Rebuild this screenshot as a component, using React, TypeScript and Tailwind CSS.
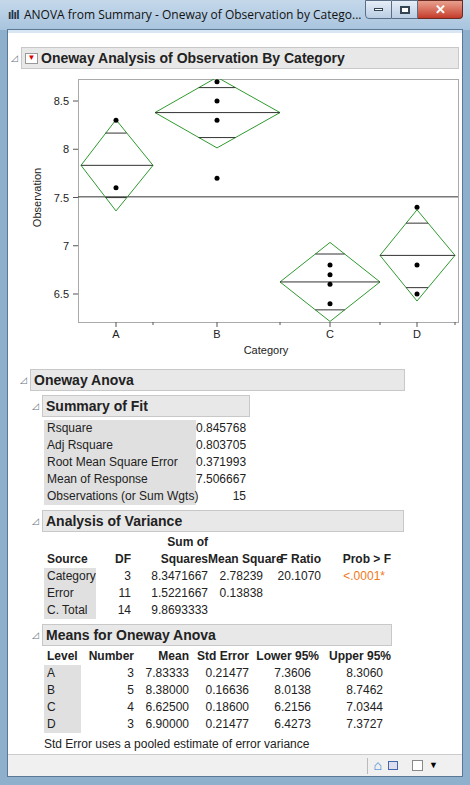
import React from "react";

const y = (v: number) => 100 + (8.5 - v) * 96.5;
const groups = [
  { x: 113, l: 78, r: 150, mean: 7.83333, lo: 7.3606, hi: 8.306, pts: [8.3, 7.6] },
  { x: 214, l: 152, r: 277, mean: 8.38, lo: 8.0138, hi: 8.7462, pts: [8.7, 8.5, 8.3, 7.7] },
  { x: 327, l: 277, r: 377, mean: 6.625, lo: 6.2156, hi: 7.0344, pts: [6.8, 6.7, 6.6, 6.4] },
  { x: 414, l: 377, r: 452, mean: 6.9, lo: 6.4273, hi: 7.3727, pts: [7.4, 6.8, 6.5] },
];

function Chart() {
  return (
    <svg width="454" height="290" viewBox="8 70 454 290" className="block">
      <defs>
        <clipPath id="c"><rect x="75" y="78" width="380" height="243" /></clipPath>
      </defs>
      <rect x="75.5" y="78.5" width="380" height="243" fill="white" stroke="#aaa" />
      {[8.5, 8, 7.5, 7, 6.5].map((v) => (
        <g key={v}>
          <line x1="70" x2="75" y1={y(v)} y2={y(v)} stroke="#555" />
          <text x="66" y={y(v) + 4} textAnchor="end" fontSize="11" fill="#222" fontFamily="Liberation Sans, sans-serif">{v}</text>
        </g>
      ))}
      <text transform={`translate(38 ${y(7.5)}) rotate(-90)`} textAnchor="middle" fontSize="11" fill="#222" fontFamily="Liberation Sans, sans-serif">Observation</text>
      <g clipPath="url(#c)">
        <line x1="75" x2="455" y1={y(7.506667)} y2={y(7.506667)} stroke="#333" />
        {groups.map((g, i) => {
          const half = g.hi - g.mean;
          const w = (g.r - g.l) / 2;
          const d = half * 0.707;
          const ww = w * (1 - d / half);
          return (
            <g key={i} fill="none" stroke="#2e9a2e">
              <polygon points={`${g.l},${y(g.mean)} ${g.x},${y(g.hi)} ${g.r},${y(g.mean)} ${g.x},${y(g.lo)}`} />
              <line x1={g.l} x2={g.r} y1={y(g.mean)} y2={y(g.mean)} stroke="#333" />
              <line x1={g.x - ww} x2={g.x + ww} y1={y(g.mean + d)} y2={y(g.mean + d)} stroke="#333" />
              <line x1={g.x - ww} x2={g.x + ww} y1={y(g.mean - d)} y2={y(g.mean - d)} stroke="#333" />
              {g.pts.map((p, j) => (
                <circle key={j} cx={g.x} cy={y(p)} r="2.5" fill="black" stroke="none" />
              ))}
            </g>
          );
        })}
      </g>
      {groups.map((g, i) => (
        <g key={i}>
          <line x1={g.x} x2={g.x} y1="321" y2="326" stroke="#555" />
          <line x1={g.r} x2={g.r} y1="321" y2="324" stroke="#555" />
          <text x={g.x} y="330" fontSize="11" textAnchor="middle" dy="7" fill="#222" fontFamily="Liberation Sans, sans-serif">{"ABCD"[i]}</text>
        </g>
      ))}
      <text x="263" y="353" fontSize="11" textAnchor="middle" fill="#222" fontFamily="Liberation Sans, sans-serif">Category</text>
    </svg>
  );
}

function Hdr({ t, w }: { t: string; w: string }) {
  return (
    <div className="flex items-center gap-[3px]">
      <span className="text-[9px] text-gray-500 leading-none">◿</span>
      <div className={`${w} h-[22px] bg-[#e8e8e8] border border-[#c8c8c8] flex items-center px-[3px] font-bold text-[14px] text-[#222]`}>{t}</div>
    </div>
  );
}

const cell = "h-[17px] leading-[17px] whitespace-nowrap";
const aovCols = "grid grid-cols-[52px_35px_77px_63px_50px_70px]";
const meanCols = "grid grid-cols-[37px_53px_55px_60px_70px_72px]";

export default function App() {
  return (
    <div className="w-[470px] h-[785px] bg-[#8fb0cc] relative overflow-hidden" style={{ fontFamily: "'Liberation Sans', Arial, sans-serif" }}>
      <div className="h-[30px] flex items-center bg-gradient-to-b from-[#c5d8ea] to-[#a8c4de] pl-[8px]">
        <span className="text-[12px] text-[#234] font-bold mr-[5px] tracking-tighter">ılıl</span>
        <span className="text-[12px] text-[#111]" style={{ fontFamily: "'Open Sans', sans-serif" }}>ANOVA from Summary - Oneway of Observation by Catego...</span>
        <div className="ml-auto mr-[7px] flex self-start">
          <div className="w-[27px] h-[19px] border border-[#5a6e86] rounded-bl-[4px] bg-gradient-to-b from-[#e6eef7] to-[#b9cde3] flex items-center justify-center"><div className="w-[9px] h-[3px] bg-white border border-[#345]" /></div>
          <div className="w-[26px] h-[19px] border border-[#5a6e86] border-l-0 bg-gradient-to-b from-[#e6eef7] to-[#b9cde3] flex items-center justify-center"><div className="w-[10px] h-[8px] border-2 border-[#345] bg-white" /></div>
          <div className="w-[45px] h-[19px] border border-[#6b2a22] border-l-0 rounded-br-[4px] bg-gradient-to-b from-[#e8a08f] to-[#c4392a] flex items-center justify-center text-white font-bold text-[13px]">✕</div>
        </div>
      </div>
      <div className="absolute left-[7px] right-[7px] top-[29px] bottom-[8px] border border-[#5b7895] bg-white flex flex-col">
        <div className="h-[3px] bg-[#d9e6f3]" />
        <div className="flex-1 pl-[3px] pt-[14px] text-[#222] text-[12px]">
          <div className="flex items-center gap-[3px]">
            <span className="text-[9px] text-gray-500 leading-none">◿</span>
            <div className="w-[438px] h-[22px] bg-[#e8e8e8] border border-[#c8c8c8] flex items-center px-[3px] gap-[3px] font-bold text-[14px]">
              <span className="w-[13px] h-[11px] bg-white border border-[#999] flex items-center justify-center text-[#d00] text-[8px]">▼</span>
              Oneway Analysis of Observation By Category
            </div>
          </div>
          <div className="mt-[2px]"><Chart /></div>
          <div className="pl-[9px] mt-[8px]">
            <Hdr t="Oneway Anova" w="w-[375px]" />
            <div className="pl-[12px] mt-[4px]">
              <Hdr t="Summary of Fit" w="w-[208px]" />
              <div className="flex ml-[12px] mt-[3px]">
                <div className="bg-[#e0e0e0] px-[3px] w-[152px]">
                  {["Rsquare", "Adj Rsquare", "Root Mean Square Error", "Mean of Response", "Observations (or Sum Wgts)"].map((s) => <div key={s} className={cell}>{s}</div>)}
                </div>
                <div className="w-[50px] text-right">
                  {["0.845768", "0.803705", "0.371993", "7.506667", "15"].map((s) => <div key={s} className={cell}>{s}</div>)}
                </div>
              </div>
              <div className="mt-[5px]"><Hdr t="Analysis of Variance" w="w-[362px]" /></div>
              <div className="ml-[12px] mt-[2px]">
                <div className={`${aovCols} font-bold`}>
                  <div /><div /><div className={`${cell} text-right`}>Sum of</div><div /><div /><div />
                  <div className={`${cell} px-[3px]`}>Source</div><div className={`${cell} text-right`}>DF</div><div className={`${cell} text-right`}>Squares</div><div className={`${cell} text-right`}>Mean Square</div><div className={`${cell} text-right`}>F Ratio</div><div className={`${cell} text-right`}>Prob &gt; F</div>
                </div>
                {[
                  ["Category", "3", "8.3471667", "2.78239", "20.1070", "<.0001*"],
                  ["Error", "11", "1.5221667", "0.13838", "", ""],
                  ["C. Total", "14", "9.8693333", "", "", ""],
                ].map((r) => (
                  <div key={r[0]} className={aovCols}>
                    <div className={`${cell} bg-[#e0e0e0] px-[3px]`}>{r[0]}</div>
                    <div className={`${cell} text-right`}>{r[1]}</div>
                    <div className={`${cell} text-right`}>{r[2]}</div>
                    <div className={`${cell} text-right pr-[8px]`}>{r[3]}</div>
                    <div className={`${cell} text-right`}>{r[4]}</div>
                    <div className={`${cell} text-right text-[#f07818] pr-[6px]`}>{r[5]}</div>
                  </div>
                ))}
              </div>
              <div className="mt-[5px]"><Hdr t="Means for Oneway Anova" w="w-[350px]" /></div>
              <div className="ml-[12px] mt-[2px]">
                <div className={`${meanCols} font-bold`}>
                  {["Level", "Number", "Mean", "Std Error", "Lower 95%", "Upper 95%"].map((s, i) => <div key={s} className={`${cell} ${i === 0 ? "px-[3px]" : "text-right"}`}>{s}</div>)}
                </div>
                {[
                  ["A", "3", "7.83333", "0.21477", "7.3606", "8.3060"],
                  ["B", "5", "8.38000", "0.16636", "8.0138", "8.7462"],
                  ["C", "4", "6.62500", "0.18600", "6.2156", "7.0344"],
                  ["D", "3", "6.90000", "0.21477", "6.4273", "7.3727"],
                ].map((r) => (
                  <div key={r[0]} className={meanCols}>
                    <div className={`${cell} bg-[#e0e0e0] px-[3px]`}>{r[0]}</div>
                    <div className={`${cell} text-right`}>{r[1]}</div>
                    <div className={`${cell} text-right`}>{r[2]}</div>
                    <div className={`${cell} text-right`}>{r[3]}</div>
                    <div className={`${cell} text-right pr-[8px]`}>{r[4]}</div>
                    <div className={`${cell} text-right pr-[8px]`}>{r[5]}</div>
                  </div>
                ))}
                <div className={`${cell} mt-[3px]`}>Std Error uses a pooled estimate of error variance</div>
              </div>
            </div>
          </div>
        </div>
        <div className="h-[22px] bg-[#f0f0f0] border-t border-[#ccc] flex items-center justify-end pr-[8px] gap-[6px] text-[11px]">
          <div className="border-l border-[#bbb] h-[16px]" />
          <span className="text-[#2a7ad0] text-[14px]">⌂</span>
          <span className="w-[10px] h-[9px] border border-[#46a] bg-[#dde]" />
          <span className="w-[11px] h-[11px] ml-[8px] border border-[#888] bg-white" />
          <span className="text-[9px]">▼</span>
          <span className="w-[10px]" />
        </div>
      </div>
    </div>
  );
}
